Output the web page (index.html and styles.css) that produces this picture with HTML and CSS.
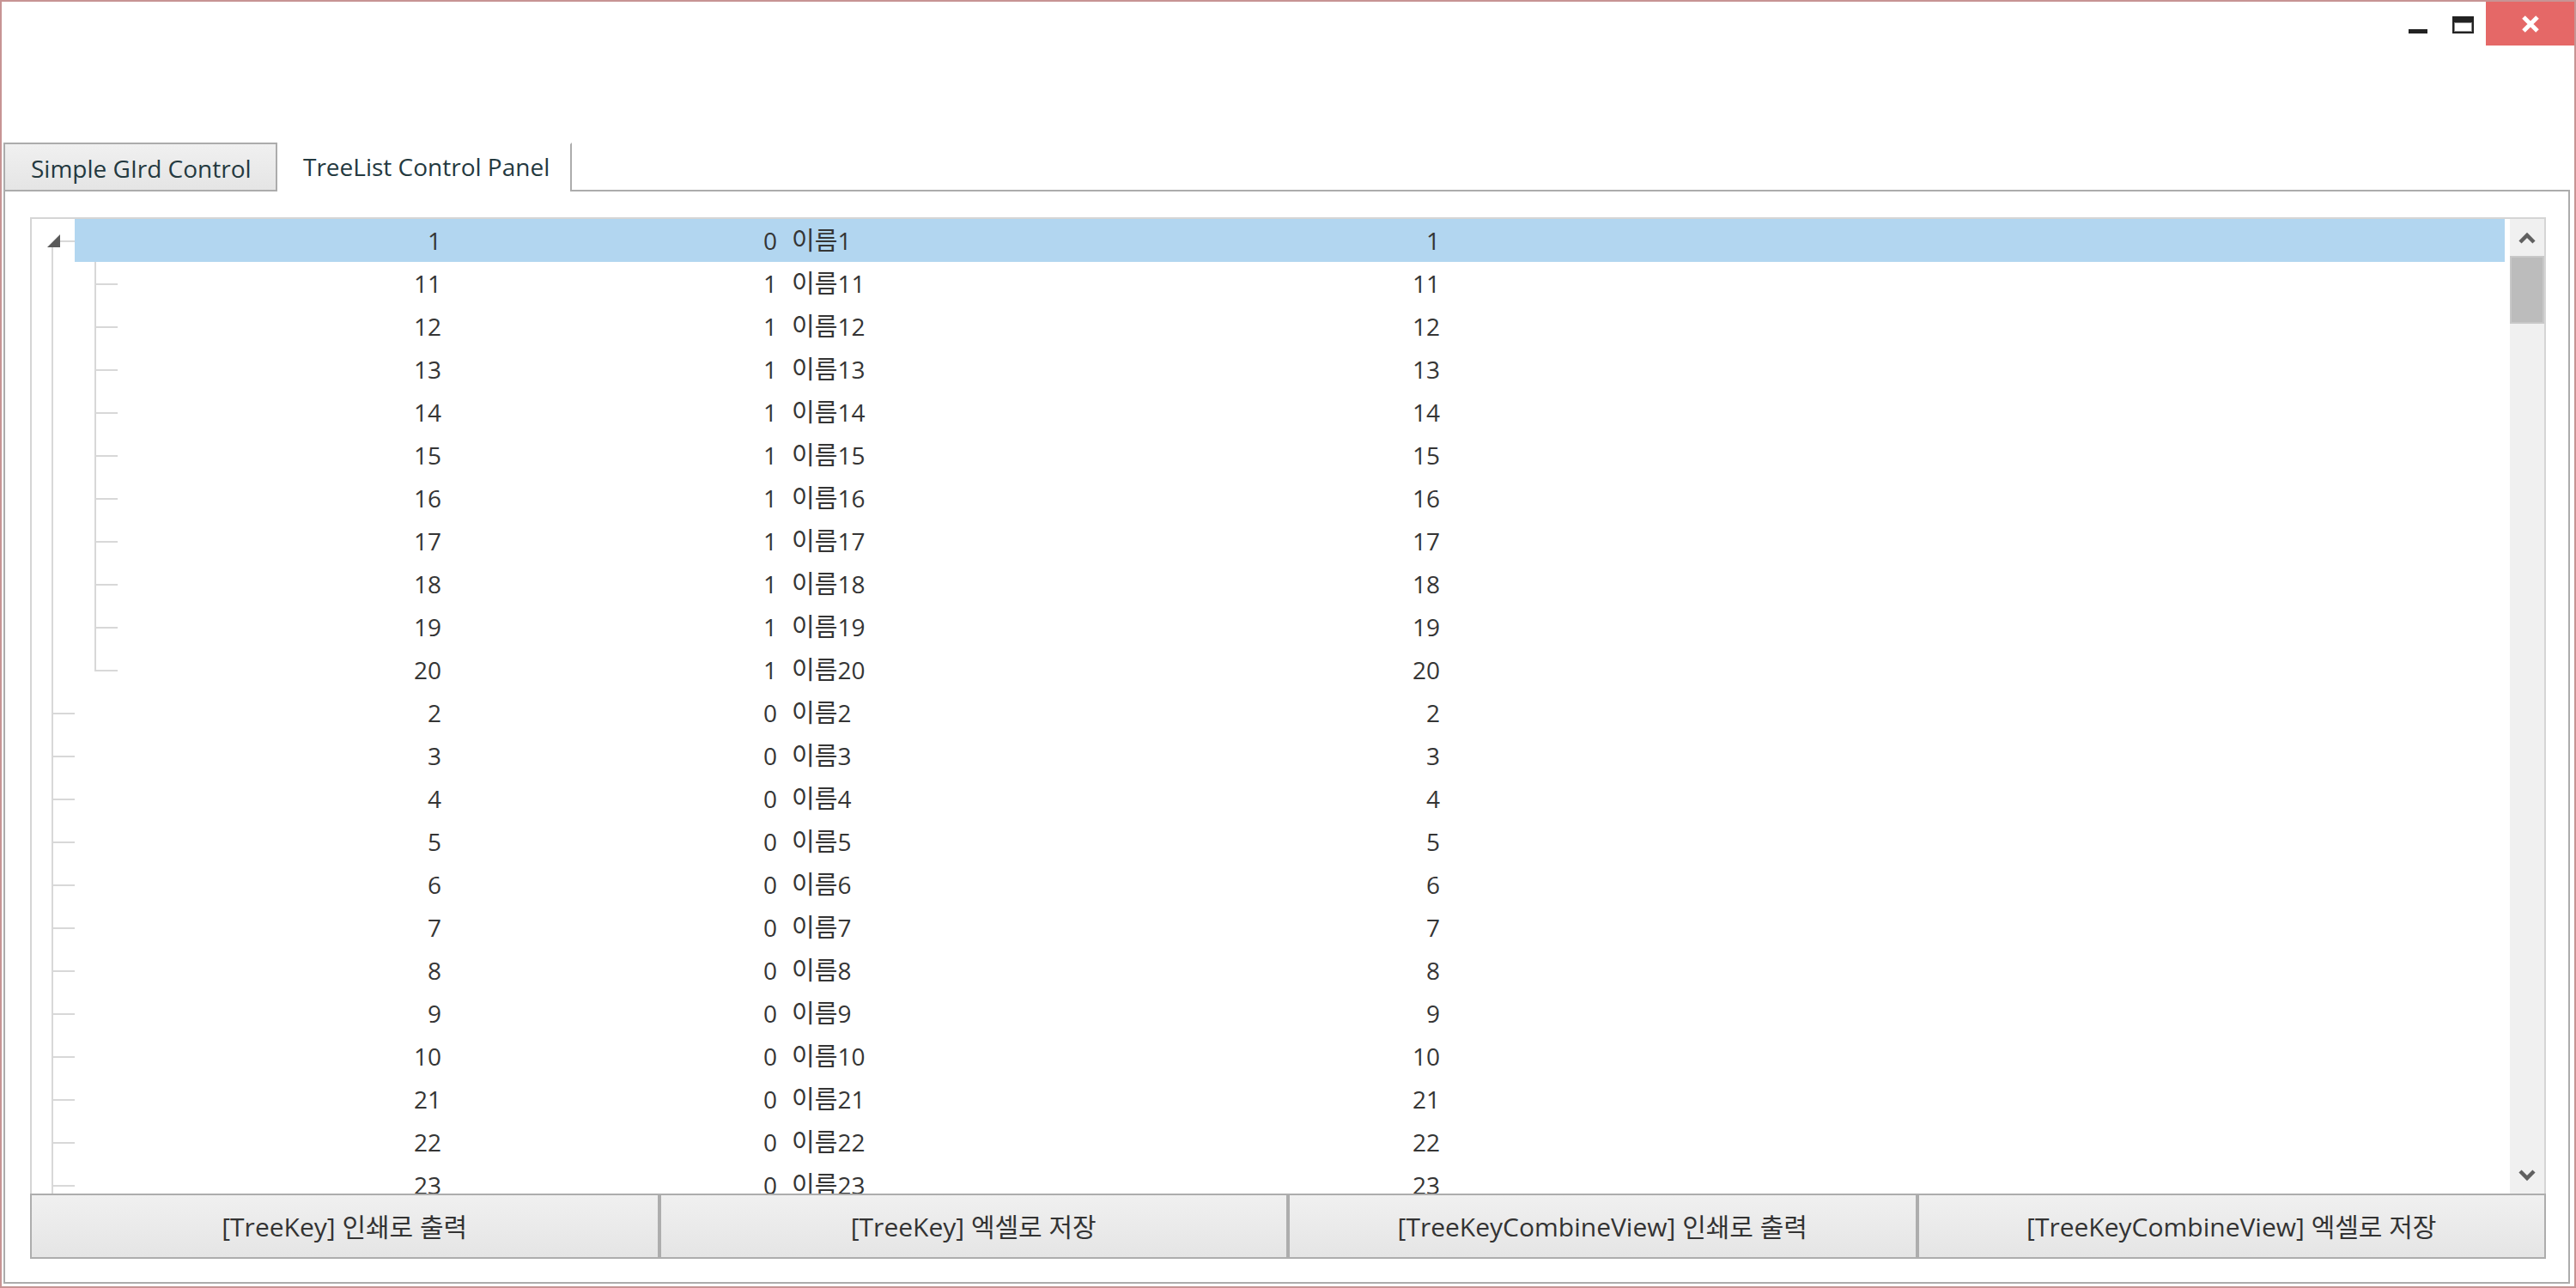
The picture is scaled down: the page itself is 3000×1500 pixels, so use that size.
FILE: index.html
```html
<!DOCTYPE html>
<html lang="ko">
<head>
<meta charset="utf-8">
<title>TreeList Control Panel</title>
<link rel="stylesheet" href="styles.css">
</head>
<body>
<div class="window">
  <div class="titlebar">
    <div class="cap cap-min"><span class="min-bar"></span></div>
    <div class="cap cap-max"><span class="max-box"></span></div>
    <div class="cap cap-close">
      <svg width="20" height="20" viewBox="0 0 20 20"><path d="M2 2 L18 18 M18 2 L2 18" stroke="#fff" stroke-width="5" stroke-linecap="butt"/></svg>
    </div>
  </div>
  <div class="tabstrip">
    <div class="tab">Simple GIrd Control</div>
    <div class="tab active">TreeList Control Panel</div>
  </div>
  <div class="panel">
    <div class="treelist">
      <div class="rows">
        <div class="row sel"><div class="g node"><span class="tri"></span></div><div class="content"><div class="g"></div><div class="c c1">1</div><div class="c c2">0</div><div class="c c3"><span class="ko">이름</span>1</div><div class="c c4">1</div></div></div>
        <div class="row"><div class="g cont"></div><div class="content"><div class="g branch"></div><div class="c c1">11</div><div class="c c2">1</div><div class="c c3"><span class="ko">이름</span>11</div><div class="c c4">11</div></div></div>
        <div class="row"><div class="g cont"></div><div class="content"><div class="g branch"></div><div class="c c1">12</div><div class="c c2">1</div><div class="c c3"><span class="ko">이름</span>12</div><div class="c c4">12</div></div></div>
        <div class="row"><div class="g cont"></div><div class="content"><div class="g branch"></div><div class="c c1">13</div><div class="c c2">1</div><div class="c c3"><span class="ko">이름</span>13</div><div class="c c4">13</div></div></div>
        <div class="row"><div class="g cont"></div><div class="content"><div class="g branch"></div><div class="c c1">14</div><div class="c c2">1</div><div class="c c3"><span class="ko">이름</span>14</div><div class="c c4">14</div></div></div>
        <div class="row"><div class="g cont"></div><div class="content"><div class="g branch"></div><div class="c c1">15</div><div class="c c2">1</div><div class="c c3"><span class="ko">이름</span>15</div><div class="c c4">15</div></div></div>
        <div class="row"><div class="g cont"></div><div class="content"><div class="g branch"></div><div class="c c1">16</div><div class="c c2">1</div><div class="c c3"><span class="ko">이름</span>16</div><div class="c c4">16</div></div></div>
        <div class="row"><div class="g cont"></div><div class="content"><div class="g branch"></div><div class="c c1">17</div><div class="c c2">1</div><div class="c c3"><span class="ko">이름</span>17</div><div class="c c4">17</div></div></div>
        <div class="row"><div class="g cont"></div><div class="content"><div class="g branch"></div><div class="c c1">18</div><div class="c c2">1</div><div class="c c3"><span class="ko">이름</span>18</div><div class="c c4">18</div></div></div>
        <div class="row"><div class="g cont"></div><div class="content"><div class="g branch"></div><div class="c c1">19</div><div class="c c2">1</div><div class="c c3"><span class="ko">이름</span>19</div><div class="c c4">19</div></div></div>
        <div class="row"><div class="g cont"></div><div class="content"><div class="g branch last"></div><div class="c c1">20</div><div class="c c2">1</div><div class="c c3"><span class="ko">이름</span>20</div><div class="c c4">20</div></div></div>
        <div class="row"><div class="g branch"></div><div class="content"><div class="g"></div><div class="c c1">2</div><div class="c c2">0</div><div class="c c3"><span class="ko">이름</span>2</div><div class="c c4">2</div></div></div>
        <div class="row"><div class="g branch"></div><div class="content"><div class="g"></div><div class="c c1">3</div><div class="c c2">0</div><div class="c c3"><span class="ko">이름</span>3</div><div class="c c4">3</div></div></div>
        <div class="row"><div class="g branch"></div><div class="content"><div class="g"></div><div class="c c1">4</div><div class="c c2">0</div><div class="c c3"><span class="ko">이름</span>4</div><div class="c c4">4</div></div></div>
        <div class="row"><div class="g branch"></div><div class="content"><div class="g"></div><div class="c c1">5</div><div class="c c2">0</div><div class="c c3"><span class="ko">이름</span>5</div><div class="c c4">5</div></div></div>
        <div class="row"><div class="g branch"></div><div class="content"><div class="g"></div><div class="c c1">6</div><div class="c c2">0</div><div class="c c3"><span class="ko">이름</span>6</div><div class="c c4">6</div></div></div>
        <div class="row"><div class="g branch"></div><div class="content"><div class="g"></div><div class="c c1">7</div><div class="c c2">0</div><div class="c c3"><span class="ko">이름</span>7</div><div class="c c4">7</div></div></div>
        <div class="row"><div class="g branch"></div><div class="content"><div class="g"></div><div class="c c1">8</div><div class="c c2">0</div><div class="c c3"><span class="ko">이름</span>8</div><div class="c c4">8</div></div></div>
        <div class="row"><div class="g branch"></div><div class="content"><div class="g"></div><div class="c c1">9</div><div class="c c2">0</div><div class="c c3"><span class="ko">이름</span>9</div><div class="c c4">9</div></div></div>
        <div class="row"><div class="g branch"></div><div class="content"><div class="g"></div><div class="c c1">10</div><div class="c c2">0</div><div class="c c3"><span class="ko">이름</span>10</div><div class="c c4">10</div></div></div>
        <div class="row"><div class="g branch"></div><div class="content"><div class="g"></div><div class="c c1">21</div><div class="c c2">0</div><div class="c c3"><span class="ko">이름</span>21</div><div class="c c4">21</div></div></div>
        <div class="row"><div class="g branch"></div><div class="content"><div class="g"></div><div class="c c1">22</div><div class="c c2">0</div><div class="c c3"><span class="ko">이름</span>22</div><div class="c c4">22</div></div></div>
        <div class="row"><div class="g branch"></div><div class="content"><div class="g"></div><div class="c c1">23</div><div class="c c2">0</div><div class="c c3"><span class="ko">이름</span>23</div><div class="c c4">23</div></div></div>
      </div>
      <div class="scrollbar">
        <div class="sb-btn"><svg width="20" height="14" viewBox="0 0 20 14"><path d="M2 12 L10 4 L18 12" fill="none" stroke="#606060" stroke-width="4.5"/></svg></div>
        <div class="sb-thumb"></div>
        <div class="sb-track"></div>
        <div class="sb-btn"><svg width="20" height="14" viewBox="0 0 20 14"><path d="M2 2 L10 10 L18 2" fill="none" stroke="#606060" stroke-width="4.5"/></svg></div>
      </div>
    </div>
    <div class="buttons">
      <div class="btn">[TreeKey] 인쇄로 출력</div>
      <div class="btn">[TreeKey] 엑셀로 저장</div>
      <div class="btn">[TreeKeyCombineView] 인쇄로 출력</div>
      <div class="btn">[TreeKeyCombineView] 엑셀로 저장</div>
    </div>
  </div>
</div>
</body>
</html>
```

FILE: styles.css
```css
html, body {
  margin: 0;
  padding: 0;
  background: #ffffff;
}

body {
  font-family: "Open Sans", "Noto Sans CJK KR", sans-serif;
}

.window {
  width: 3000px;
  height: 1500px;
  box-sizing: border-box;
  border: 2px solid #c79494;
  display: flex;
  flex-direction: column;
  background: #ffffff;
  overflow: hidden;
}

/* title bar */
.titlebar {
  height: 51px;
  display: flex;
  justify-content: flex-end;
  flex: none;
}

.cap {
  display: flex;
  align-items: center;
  justify-content: center;
  height: 51px;
}

.cap-min { width: 52px; }
.cap-max { width: 53px; }
.cap-close {
  width: 103px;
  background: #e56867;
}

.min-bar {
  display: block;
  width: 22px;
  height: 5px;
  background: #222222;
  margin-top: 18px;
}

.max-box {
  display: block;
  width: 25px;
  height: 20px;
  box-sizing: border-box;
  border: 2px solid #222222;
  border-top-width: 7px;
  background: #ffffff;
  box-shadow: inset 0 0 0 1px #8a8a8a;
  margin-top: 3px;
}

/* tabs */
.tabstrip {
  margin-top: 113px;
  margin-left: 2px;
  height: 55px;
  display: flex;
  align-items: flex-start;
  flex: none;
  color: #24393f;
  font-size: 28px;
}

.tab {
  height: 55px;
  box-sizing: border-box;
  padding: 2px 0 0 30px;
  border: 2px solid #acacac;
  border-bottom: none;
  background: linear-gradient(#f0f0f0, #e5e5e5);
  display: flex;
  align-items: center;
  width: 319px;
  white-space: nowrap;
}

.tab.active {
  width: 343px;
  height: 57px;
  margin-bottom: -2px;
  border-top-color: transparent;
  border-left: none;
  background: #ffffff;
  position: relative;
  z-index: 1;
  padding-left: 30px;
  padding-top: 0;
  padding-bottom: 4px;
}

/* panel */
.panel {
  margin: 0 5px 3px 2px;
  height: 1274px;
  box-sizing: border-box;
  border: 2px solid #acacac;
  padding: 30px 26px 27px 29px;
  display: flex;
  flex-direction: column;
  flex: none;
}

.treelist {
  height: 1137px;
  box-sizing: border-box;
  border: 2px solid #d5d5d5;
  border-bottom: none;
  display: flex;
  flex: none;
}

.rows {
  flex: 1;
  overflow: hidden;
  padding-right: 4px;
  font-size: 28px;
  color: #353535;
}

.row {
  display: flex;
  height: 50px;
  line-height: 50px;
}

.content {
  flex: 1;
  display: flex;
}

.row.sel .content {
  background: #b2d6f0;
}

.g {
  position: relative;
  width: 50px;
  height: 50px;
  flex: none;
}

.branch::before,
.cont::before,
.node::before {
  content: "";
  position: absolute;
  left: 23px;
  top: 0;
  bottom: 0;
  width: 2px;
  background: #d8d8d8;
}

.branch::after,
.node::after {
  content: "";
  position: absolute;
  left: 23px;
  right: 0;
  top: 25px;
  height: 2px;
  background: #d8d8d8;
}

.branch.last::before {
  bottom: 24px;
}

.node::before {
  top: 33px;
}

.node::after {
  left: 33px;
}

.tri {
  position: absolute;
  left: 18px;
  top: 18px;
  width: 0;
  height: 0;
  border-left: 15px solid transparent;
  border-bottom: 15px solid #5a5a5a;
}

.c {
  flex: none;
  box-sizing: border-box;
  white-space: nowrap;
}

.c1 { width: 377px; text-align: right; }
.c2 { width: 391px; text-align: right; }
.c3 { width: 400px; padding-left: 17px; }
.c4 { width: 372px; text-align: right; }

.ko {
  font-size: 29px;
}

/* scrollbar */
.scrollbar {
  width: 40px;
  flex: none;
  margin-left: 2px;
  background: #f0f0f0;
  display: flex;
  flex-direction: column;
}

.sb-btn {
  height: 43px;
  display: flex;
  align-items: center;
  justify-content: center;
  flex: none;
}

.sb-thumb {
  height: 79px;
  box-sizing: border-box;
  border: 2px solid #c8c8c8;
  background: #bcbcbc;
  flex: none;
}

.sb-track {
  flex: 1;
}

/* buttons */
.buttons {
  display: flex;
  height: 76px;
  flex: none;
}

.btn {
  flex: 1;
  box-sizing: border-box;
  border: 2px solid #adadad;
  background: linear-gradient(#f0f0f0, #e5e5e5);
  display: flex;
  align-items: center;
  justify-content: center;
  font-size: 30px;
  color: #333333;
  white-space: nowrap;
  padding-bottom: 2px;
}
```
